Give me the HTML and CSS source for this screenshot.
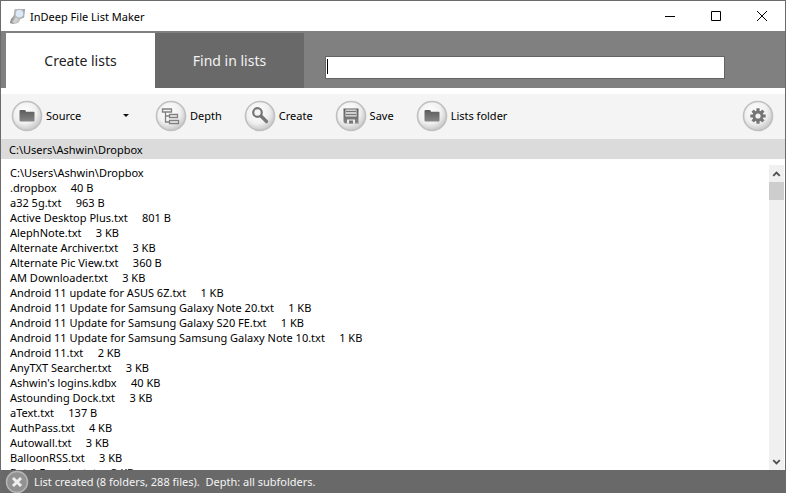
FILE: index.html
```html
<!DOCTYPE html>
<html lang="en">
<head>
<meta charset="utf-8">
<title>InDeep File List Maker</title>
<link rel="stylesheet" href="styles.css">
</head>
<body>
<svg class="defs" width="0" height="0" aria-hidden="true">
  <defs>
    <linearGradient id="ink" x1="0" y1="0" x2="0" y2="1"><stop offset="0" stop-color="#5c5c5c"/><stop offset="1" stop-color="#868686"/></linearGradient>
    <radialGradient id="disc" cx=".42" cy=".36" r=".66"><stop offset="0" stop-color="#fff"/><stop offset=".6" stop-color="#f0f0f1"/><stop offset="1" stop-color="#c4c4c6"/></radialGradient>
    <linearGradient id="metal" x1="0" y1="0" x2="1" y2="0"><stop offset="0" stop-color="#888"/><stop offset=".5" stop-color="#c8c8c8"/><stop offset="1" stop-color="#a0a0a0"/></linearGradient>
    <g id="button-disc"><circle cx="16" cy="16" r="14.5" fill="url(#disc)" stroke="#c0c0c2" stroke-width="1.6"/></g>
    <path id="folder" d="M8.500 11q0-1 1-1h4q1 0 1.300 1l.2.7H22.500q1 0 1 1V20.500q0 1-1 1H9.500q-1 0-1-1z" fill="url(#ink)"/>
  </defs>
</svg>
<div class="window">
  <header class="titlebar">
    <svg class="app-icon" viewBox="0 0 18 18" aria-hidden="true">
      <path d="M6 1h11l-1 9-4 2-2 4-6 1-3-1 1-4 3-4z" fill="url(#metal)"/>
      <path d="M3 15l4-5 3 2-3 4z" fill="#d0d0d0"/>
      <circle cx="11" cy="6" r="4.600" fill="#dceaf7" stroke="#a9aeb4"/>
    </svg>
    <h1 class="title">InDeep File List Maker</h1>
    <div class="caption-buttons">
      <button class="caption" aria-label="Minimize"><svg viewBox="0 0 12 12"><path d="M1 6.500h10"/></svg></button>
      <button class="caption" aria-label="Maximize"><svg viewBox="0 0 12 12"><path d="M1.500 1.500h9v9h-9z"/></svg></button>
      <button class="caption" aria-label="Close"><svg viewBox="0 0 12 12"><path d="M1 1l10 10M11 1L1 11"/></svg></button>
    </div>
  </header>
  <nav class="tabs">
    <button class="tab active">Create lists</button>
    <button class="tab">Find in lists</button>
    <div class="search"><input class="search-input" type="text" aria-label="Search text"><span class="caret"></span></div>
  </nav>
  <div class="toolbar">
    <button class="tool source"><svg viewBox="0 0 32 32"><use href="#button-disc"/><use href="#folder"/></svg><span>Source</span><i class="drop"></i></button>
    <button class="tool"><svg viewBox="0 0 32 32"><use href="#button-disc"/><g fill="#f4f4f4" stroke="#808080" stroke-width="1.300"><path d="M10.500 12v10h4M10.500 16h4" fill="none"/><path d="M7.500 9h9v3h-9zM14.500 14.500h8v3h-8zM14.500 20.500h9v3h-9z"/></g></svg><span>Depth</span></button>
    <button class="tool"><svg viewBox="0 0 32 32"><use href="#button-disc"/><circle cx="13.500" cy="12.500" r="4.300" fill="#f5f5f5" stroke="#777" stroke-width="2.200"/><path d="M17 16l5.500 5.500" stroke="#777" stroke-width="3.200" stroke-linecap="round"/></svg><span>Create</span></button>
    <button class="tool"><svg viewBox="0 0 32 32"><use href="#button-disc"/><path d="M8.500 8.500h15v15H10L8.500 22z" fill="url(#ink)"/><path d="M10.500 9.500h11v7h-11z" fill="#eee"/><path d="M11 11.500h10M11 14.500h10" stroke="#777" stroke-width="1.500"/><path d="M12 19.500h8v4h-8z" fill="#eee"/><path d="M14 20.500h4v3h-4z" fill="#777"/></svg><span>Save</span></button>
    <button class="tool"><svg viewBox="0 0 32 32"><use href="#button-disc"/><use href="#folder"/></svg><span>Lists folder</span></button>
    <button class="tool settings" aria-label="Settings"><svg viewBox="0 0 32 32"><use href="#button-disc"/><g stroke="#757575" stroke-width="3.200"><path d="M16 8.300v15.400M8.300 16h15.400M10.600 10.600l10.800 10.800M21.400 10.600L10.600 21.400"/></g><circle cx="16" cy="16" r="5.500" fill="#757575"/><circle cx="16" cy="16" r="2.600" fill="#f2f2f2"/></svg></button>
  </div>
  <div class="path">C:\Users\Ashwin\Dropbox</div>
  <main class="content">
    <ul class="files">
      <li>C:\Users\Ashwin\Dropbox</li>
      <li>.dropbox     40 B</li>
      <li>a32 5g.txt     963 B</li>
      <li>Active Desktop Plus.txt     801 B</li>
      <li>AlephNote.txt     3 KB</li>
      <li>Alternate Archiver.txt     3 KB</li>
      <li>Alternate Pic View.txt     360 B</li>
      <li>AM Downloader.txt     3 KB</li>
      <li>Android 11 update for ASUS 6Z.txt     1 KB</li>
      <li>Android 11 Update for Samsung Galaxy Note 20.txt     1 KB</li>
      <li>Android 11 Update for Samsung Galaxy S20 FE.txt     1 KB</li>
      <li>Android 11 Update for Samsung Samsung Galaxy Note 10.txt     1 KB</li>
      <li>Android 11.txt     2 KB</li>
      <li>AnyTXT Searcher.txt     3 KB</li>
      <li>Ashwin's logins.kdbx     40 KB</li>
      <li>Astounding Dock.txt     3 KB</li>
      <li>aText.txt     137 B</li>
      <li>AuthPass.txt     4 KB</li>
      <li>Autowall.txt     3 KB</li>
      <li>BalloonRSS.txt     3 KB</li>
      <li>BatchEncoder.txt     3 KB</li>
    </ul>
    <div class="scrollbar" aria-hidden="true">
      <svg class="arrow" viewBox="0 0 16 17"><path d="M4.500 11L8 7.500 11.500 11"/></svg>
      <div class="thumb"></div>
      <svg class="arrow down" viewBox="0 0 16 17"><path d="M4.500 7L8 10.500 11.500 7"/></svg>
    </div>
  </main>
  <footer class="status">
    <button class="cancel" aria-label="Cancel"><svg viewBox="0 0 24 24"><circle cx="12" cy="12" r="10.500" fill="#929292" stroke="#b5b5b5" stroke-width="1.500"/><path d="M8 8l8 8M16 8l-8 8" stroke="#eee" stroke-width="3"/></svg></button>
    <span>List created (8 folders, 288 files).  Depth: all subfolders.</span>
  </footer>
</div>
</body>
</html>
```
FILE: styles.css
```css
* { box-sizing: border-box; }
body {
  margin: 0;
  font: 11px/15px "Noto Sans", "Open Sans", sans-serif;
  color: #000;
}
button { font: inherit; color: inherit; border: 0; padding: 0; background: none; }
svg { display: block; flex: none; }
.defs { position: absolute; }
.window {
  display: flex;
  flex-direction: column;
  height: 100vh;
  overflow: hidden;
  background: #fff;
  border: 1px solid #6b6b6b;
  border-bottom: 0;
}
.titlebar { display: flex; flex: none; align-items: center; height: 30px; padding-left: 8px; }
.app-icon { width: 17px; height: 17px; }
.title { margin: 0 0 0 4px; font-size: 11px; font-weight: 400; }
.caption-buttons { display: flex; margin-left: auto; }
.caption { display: flex; align-items: center; justify-content: center; width: 46px; height: 30px; }
.caption svg { width: 12px; height: 12px; fill: none; stroke: #000; }
.tabs {
  display: flex;
  flex: none;
  height: 57px;
  padding: 2px 60px 0 5px;
  background: #808080;
}
.tab { flex: none; width: 149px; background: #696969; color: #f2f2f2; font-size: 14px; line-height: 20px; }
.tab.active { background: #fff; color: #222; }
.search { position: relative; flex: 1; margin: 23px 0 0 21px; }
.search-input { display: block; width: 100%; height: 23px; border: 1px solid #646464; padding: 0 2px; font: inherit; outline: 0; }
.caret { position: absolute; left: 2px; top: 3px; width: 1px; height: 15px; background: #000; }
.toolbar {
  display: flex;
  flex: none;
  align-items: center;
  height: 45px;
  margin-top: 6px;
  padding: 0 11px 2px 10px;
  gap: 22px;
  background: #f4f4f4;
}
.tool { display: flex; align-items: center; gap: 3px; }
.tool svg { width: 32px; height: 32px; }
.source { width: 122px; padding-right: 4px; }
.drop { margin-left: auto; border: 3px solid transparent; border-top-color: #111; border-bottom: 0; }
.settings { margin-left: auto; }
.path { flex: none; height: 20px; padding: 3px 8px; background: #dbdbdb; }
.content { display: flex; flex: 1; min-height: 0; padding-top: 6px; }
.files { flex: 1; margin: 0; padding: 0 0 0 9px; overflow: hidden; list-style: none; }
.files li { white-space: pre; }
.scrollbar { display: flex; flex-direction: column; width: 15px; margin-right: 1px; background: #f0f0f0; }
.arrow { width: 15px; height: 17px; fill: none; stroke: #505050; stroke-width: 2; }
.thumb { height: 18px; background: #cdcdcd; }
.down { margin-top: auto; }
.status {
  display: flex;
  flex: none;
  align-items: center;
  height: 23px;
  padding-left: 4px;
  gap: 5px;
  background: #696969;
  color: #f4f4f4;
  white-space: pre;
}
.cancel svg { width: 24px; height: 24px; }
```
